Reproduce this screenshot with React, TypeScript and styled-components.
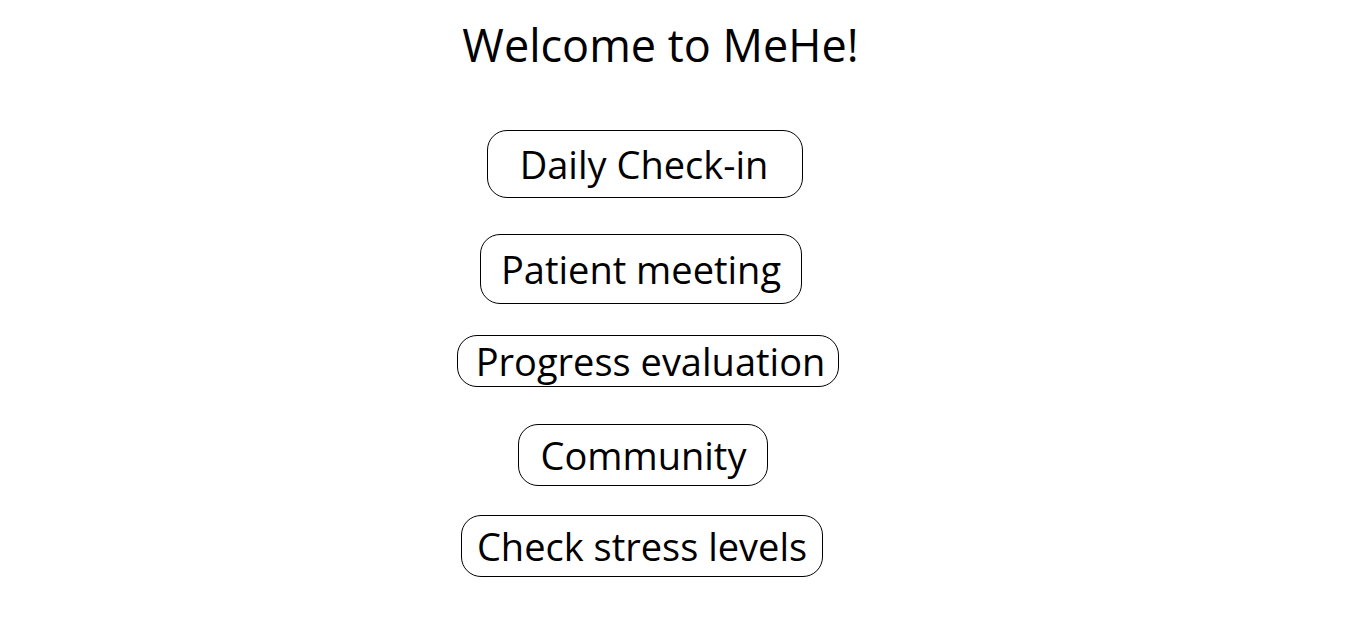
import React from 'react';
import styled, { createGlobalStyle } from 'styled-components';

const GlobalStyle = createGlobalStyle`
	html, body {
		margin: 0;
		padding: 0;
		background: #ffffff;
	}
	body {
		font-family: 'Open Sans', 'Noto Sans', sans-serif;
		color: #000000;
	}
`;

const Page = styled.main`
	display: flex;
	flex-direction: column;
	align-items: center;
	width: 1350px;
	padding: 18px 64px 0 0;
	box-sizing: border-box;
`;

const Title = styled.h1`
	margin: 0 0 58px 35px;
	font-size: 45px;
	line-height: 54px;
	font-weight: 400;
`;

interface PillProps {
	$padY: number;
	$padL: number;
	$padR: number;
	$gap: number;
	$shift: number;
}

const Pill = styled.button<PillProps>`
	display: block;
	margin: 0 ${({ $shift }) => ($shift < 0 ? -$shift * 2 : 0)}px ${({ $gap }) => $gap}px
		${({ $shift }) => ($shift > 0 ? $shift * 2 : 0)}px;
	padding: ${({ $padY, $padL, $padR }) => `${$padY}px ${$padR}px ${$padY}px ${$padL}px`};
	font-family: 'Open Sans', 'Noto Sans', sans-serif;
	font-size: 38px;
	line-height: 44px;
	font-weight: 400;
	color: #000000;
	background: #ffffff;
	border: 1px solid #000000;
	border-radius: 20px;
	cursor: pointer;
	white-space: nowrap;
`;

const items = [
	{ label: 'Daily Check-in', padY: 11, padL: 32, padR: 34, gap: 36, shift: 2 },
	{ label: 'Patient meeting', padY: 12, padL: 20, padR: 20, gap: 31, shift: -2 },
	{ label: 'Progress evaluation', padY: 3, padL: 18, padR: 13, gap: 37, shift: 5 },
	{ label: 'Community', padY: 8, padL: 22, padR: 21, gap: 29, shift: 0 },
	{ label: 'Check stress levels', padY: 8, padL: 15, padR: 15, gap: 0, shift: -1 }
];

export default function App() {
	return (
		<>
			<GlobalStyle />
			<Page>
				<Title>Welcome to MeHe!</Title>
				{items.map((item) => (
					<Pill
						key={item.label}
						$padY={item.padY}
						$padL={item.padL}
						$padR={item.padR}
						$gap={item.gap}
						$shift={item.shift}
					>
						{item.label}
					</Pill>
				))}
			</Page>
		</>
	);
}
